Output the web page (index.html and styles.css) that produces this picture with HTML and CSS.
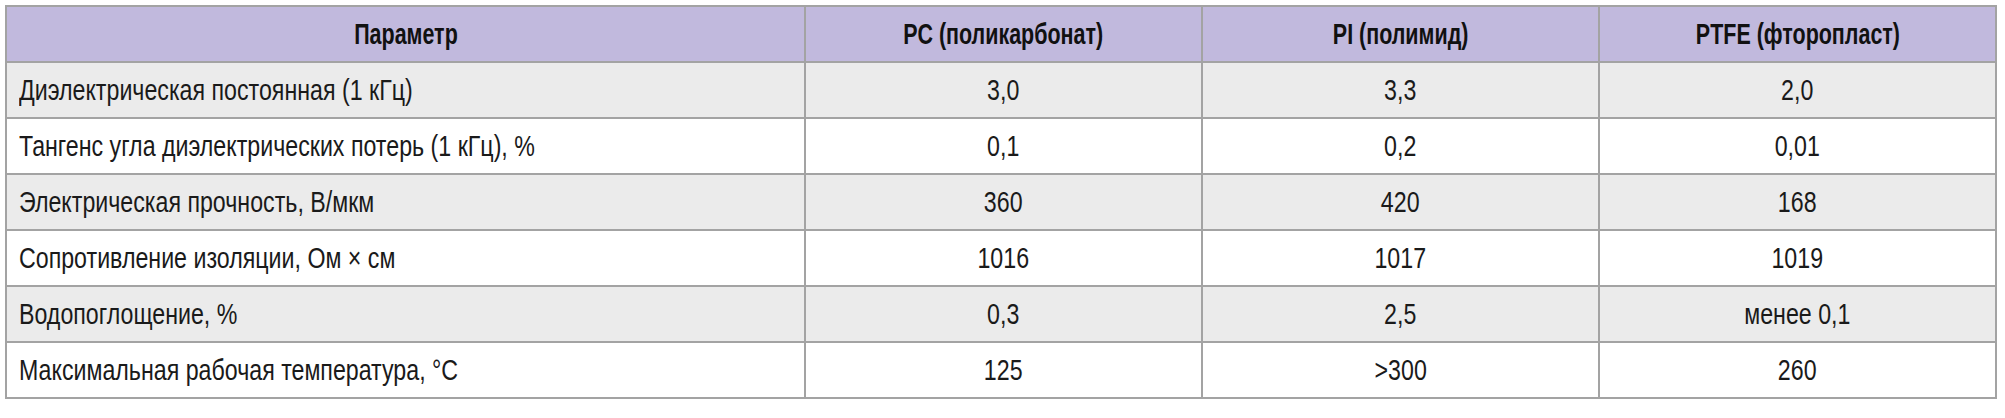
FILE: index.html
```html
<!DOCTYPE html>
<html lang="ru">
<head>
<meta charset="utf-8">
<link rel="stylesheet" href="styles.css">
</head>
<body>
<table class="props">
  <colgroup>
    <col class="c-param">
    <col class="c-val">
    <col class="c-val">
    <col class="c-val">
  </colgroup>
  <thead>
    <tr>
      <th><span class="t">Параметр</span></th>
      <th><span class="t">PC (поликарбонат)</span></th>
      <th><span class="t">PI (полимид)</span></th>
      <th><span class="t">PTFE (фторопласт)</span></th>
    </tr>
  </thead>
  <tbody>
    <tr class="shade">
      <td class="name"><span class="t">Диэлектрическая постоянная (1 кГц)</span></td>
      <td><span class="t">3,0</span></td><td><span class="t">3,3</span></td><td><span class="t">2,0</span></td>
    </tr>
    <tr>
      <td class="name"><span class="t">Тангенс угла диэлектрических потерь (1 кГц), %</span></td>
      <td><span class="t">0,1</span></td><td><span class="t">0,2</span></td><td><span class="t">0,01</span></td>
    </tr>
    <tr class="shade">
      <td class="name"><span class="t">Электрическая прочность, В/мкм</span></td>
      <td><span class="t">360</span></td><td><span class="t">420</span></td><td><span class="t">168</span></td>
    </tr>
    <tr>
      <td class="name"><span class="t">Сопротивление изоляции, Ом × см</span></td>
      <td><span class="t">1016</span></td><td><span class="t">1017</span></td><td><span class="t">1019</span></td>
    </tr>
    <tr class="shade">
      <td class="name"><span class="t">Водопоглощение, %</span></td>
      <td><span class="t">0,3</span></td><td><span class="t">2,5</span></td><td><span class="t">менее 0,1</span></td>
    </tr>
    <tr>
      <td class="name"><span class="t">Максимальная рабочая температура, °C</span></td>
      <td><span class="t">125</span></td><td><span class="t">&gt;300</span></td><td><span class="t">260</span></td>
    </tr>
  </tbody>
</table>
</body>
</html>
```
FILE: styles.css
```css
html, body {
  margin: 0;
  padding: 0;
  background: #ffffff;
}
body {
  padding: 5px 0 0 5px;
  font-family: "Liberation Sans", Arial, sans-serif;
  color: #1a1a1a;
}
.props {
  border-collapse: collapse;
  table-layout: fixed;
  width: 1991px;
  border: 2px solid #a3a3a3;
}
.c-param { width: 799px; }
.c-val { width: 397px; }
.props th,
.props td {
  border: 2px solid #a3a3a3;
  height: 54px;
  padding: 0 12px;
  text-align: center;
  font-size: 29px;
  line-height: 1;
  vertical-align: middle;
  white-space: nowrap;
}
.t {
  display: inline-block;
  transform: scaleX(0.8);
  transform-origin: center center;
}
.props th {
  background: #c1b9dd;
  font-weight: bold;
  color: #111111;
}
.props th .t {
  transform: scaleX(0.74);
}
.props td.name {
  text-align: left;
}
.props td.name .t {
  transform-origin: left center;
}
.props tr.shade td {
  background: #ebebeb;
}
```
